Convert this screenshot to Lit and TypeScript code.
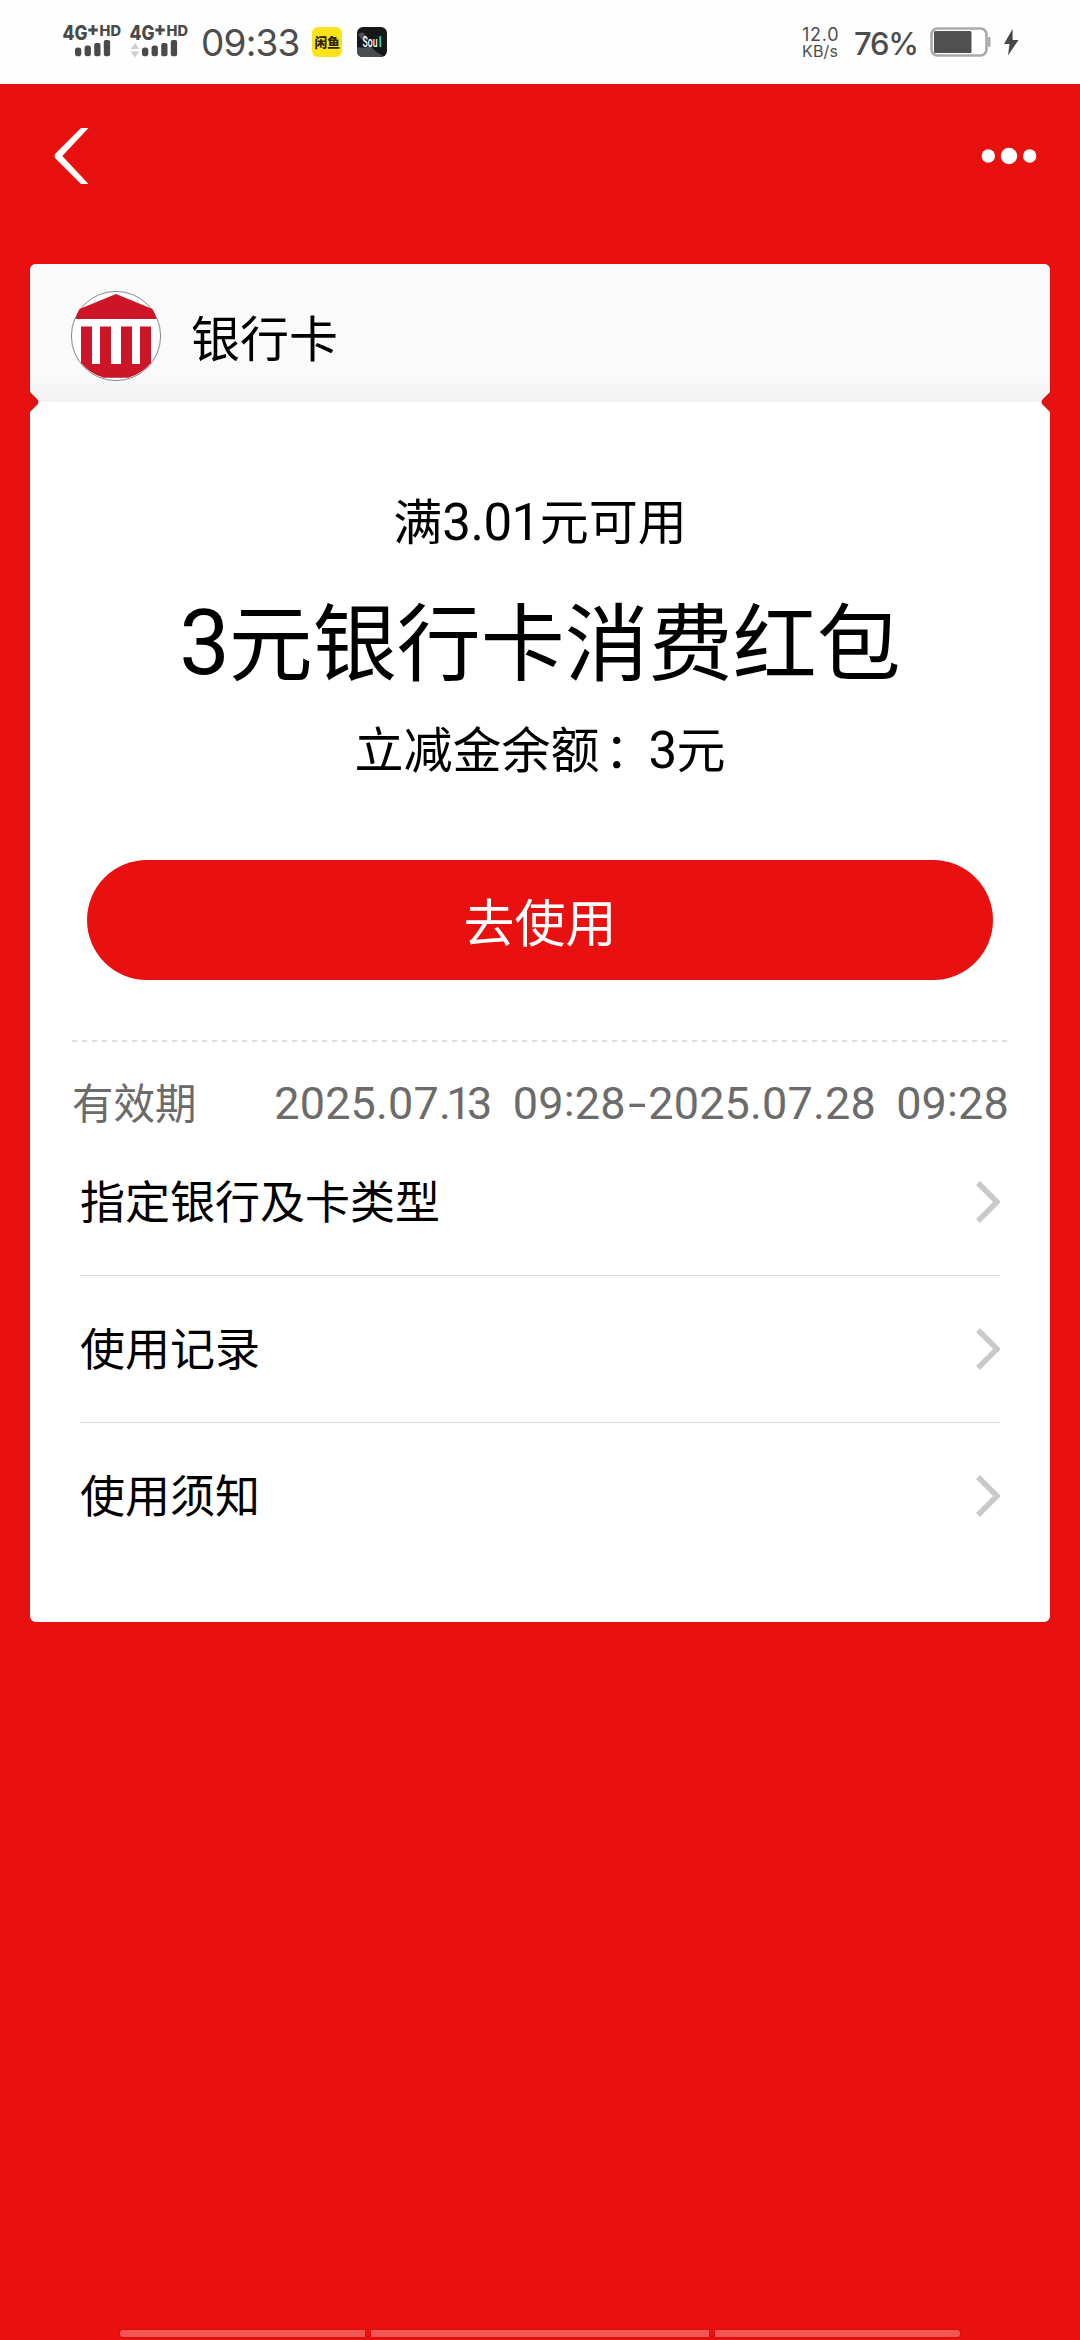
import { LitElement, html, css, svg } from "lit";
import { customElement, property } from "lit/decorators.js";

const SANS = css`"Noto Sans CJK SC", "Liberation Sans", sans-serif`;

@customElement("signal-indicator")
class SignalIndicator extends LitElement {
  @property({ type: Boolean }) traffic = false;

  static styles = css`
    :host { display: block; width: 67px; height: 40px; }
    .icon { display: block; font-family: Inter, sans-serif; font-weight: 800; }
  `;

  render() {
    return html`
      <svg class="icon" width="67" height="40" viewBox="0 0 67 40" fill="#4a4a4a">
        <text x="0.500" y="19.5" font-size="20" textLength="25" lengthAdjust="spacingAndGlyphs">4G</text>
        <path d="M31 5v10M26.300 10h9.500" stroke="#4a4a4a" stroke-width="2.8" />
        <text x="37.5" y="15.500" font-size="14.500" textLength="21.5" lengthAdjust="spacingAndGlyphs">HD</text>
        <rect x="13" y="27.5" width="6.300" height="8.700" rx="2.8" />
        <rect x="22.6" y="25.5" width="6.300" height="10.7" rx="2.5" />
        <rect x="32.2" y="23" width="6.300" height="13.2" rx="2" />
        <rect x="41.800" y="20" width="6.300" height="16.2" rx="2" />
        ${this.traffic
          ? svg`<path d="M6 23l4.3 6H1.7zM6 37.500l4.3-6H1.7z" fill="#cfcfcf" />`
          : ""}
      </svg>
    `;
  }
}

@customElement("status-bar")
class StatusBar extends LitElement {
  static styles = css`
    :host {
      display: flex;
      justify-content: space-between;
      height: 84px;
      box-sizing: border-box;
      padding: 20px 58px 0 62px;
      background: #fefefe;
      color: #4d4d4d;
      font-family: Inter, sans-serif;
    }
    .side { display: flex; align-items: flex-start; }
    .time { width: 111px; margin-left: 5px; font-size: 37px; line-height: 45px; letter-spacing: -0.8px; white-space: nowrap; }
    .app { display: block; margin: 7px 15px 0 0; }
    .fish { font-family: ${SANS}; font-weight: 900; }
    .soul { font-family: Roboto, sans-serif; font-weight: 500; }
    .speed { width: 52px; padding-top: 7px; font-size: 18px; line-height: 15px; letter-spacing: 0.7px; }
    .unit { padding-top: 1px; font-size: 16px; line-height: 17px; letter-spacing: 0.2px; }
    .percent { width: 76px; font-size: 31px; font-weight: 500; line-height: 47px; letter-spacing: -1.2px; white-space: nowrap; }
    .battery { display: block; margin-top: 6px; }
  `;

  render() {
    return html`
      <div class="side">
        <signal-indicator></signal-indicator>
        <signal-indicator traffic></signal-indicator>
        <div class="time">09:33</div>
        <svg class="app" width="30" height="30" viewBox="0 0 30 30">
          <rect width="30" height="30" rx="6" fill="#fde21a" />
          <text class="fish" x="2.500" y="20" font-size="13" textLength="25.500" lengthAdjust="spacingAndGlyphs" fill="#2b2608">闲鱼</text>
        </svg>
        <svg class="app" width="30" height="30" viewBox="0 0 30 30">
          <rect width="30" height="30" rx="6" fill="#151718" />
          <path d="M1 7q5-4 8 2l3 4q-5 1-8-1zM0 20q8 2 14-1 4 6 9 8l3 2q-2 1-4 1H6q-6 0-6-6z" fill="#4b4e50" />
          <text class="soul" x="5.500" y="20" font-size="14" textLength="15" lengthAdjust="spacingAndGlyphs" fill="#fff">Sou</text>
          <text class="soul" x="21.500" y="20" font-size="14" fill="#35d6c8">l</text>
        </svg>
      </div>
      <div class="side">
        <div class="speed">
          <div>12.0</div>
          <div class="unit">KB/s</div>
        </div>
        <div class="percent">76%</div>
        <svg class="battery" width="92" height="32" viewBox="0 0 92 32">
          <rect x="1.500" y="2.500" width="55" height="27" rx="6" fill="#fff" stroke="#aaa" stroke-width="2.600" />
          <rect x="4" y="5" width="37.500" height="22" rx="1.500" fill="#505050" />
          <path d="M58.500 11.500h1.500v9h-1.500z" fill="#aaa" stroke="#aaa" />
          <path d="M82.500 3L74 18h5.500l-1.500 11.500L88.500 14h-5.800z" fill="#484848" />
        </svg>
      </div>
    `;
  }
}

@customElement("nav-header")
class NavHeader extends LitElement {
  static styles = css`
    :host {
      display: flex;
      justify-content: space-between;
      align-items: center;
      height: 144px;
      padding: 0 43px 0 54px;
    }
    .icon { display: block; }
  `;

  render() {
    return html`
      <svg class="icon" width="36" height="56" viewBox="0 0 36 56">
        <path d="M27 0h7.500L8.300 28 34.500 56H27L1.500 30.500q-1.800-2.500 0-5z" fill="#fff" />
      </svg>
      <svg class="icon" width="56" height="18" viewBox="0 0 56 18" fill="#fff">
        <circle cx="7.300" cy="9" r="6.700" />
        <circle cx="28" cy="9" r="8.200" />
        <circle cx="48.700" cy="9" r="6.700" />
      </svg>
    `;
  }
}

@customElement("link-row")
class LinkRow extends LitElement {
  @property() label = "";

  static styles = css`
    :host {
      display: flex;
      justify-content: space-between;
      align-items: center;
      height: 146px;
      border-bottom: 1px solid #d8d8d8;
      font-size: 45px;
      line-height: 60px;
      color: #000;
    }
    :host(:last-child) { border-bottom-color: transparent; }
    .label { padding-bottom: 5px; }
    .arrow { display: block; }
  `;

  render() {
    return html`
      <span class="label">${this.label}</span>
      <svg class="arrow" width="24" height="42" viewBox="0 0 24 42">
        <path d="M2 2l19 19L2 40" fill="none" stroke="#c9c9c9" stroke-width="5.500" />
      </svg>
    `;
  }
}

@customElement("coupon-card")
class CouponCard extends LitElement {
  static styles = css`
    :host {
      display: block;
      height: 1358px;
      margin: 0 30px;
      border-radius: 6px;
      background: #fff;
      color: #000;
      position: relative;
    }
    .head {
      display: flex;
      align-items: center;
      gap: 29px;
      height: 138px;
      box-sizing: border-box;
      padding: 6px 0 0 40px;
      border-radius: 6px 6px 0 0;
      background: linear-gradient(#fafafa 0 78%, #f2f2f2);
      font-size: 49px;
      line-height: 60px;
    }
    .name { padding-bottom: 1px; }
    .logo { display: block; }
    .notch { position: absolute; top: 128px; display: block; }
    .left { left: 0; }
    .right { right: 0; transform: scaleX(-1); }
    .summary {
      display: flex;
      flex-direction: column;
      align-items: center;
      height: 458px;
      padding-top: 85px;
      box-sizing: border-box;
      white-space: nowrap;
    }
    .limit { font-size: 49px; line-height: 64px; }
    .num { font-family: Roboto, sans-serif; font-size: 51px; letter-spacing: -0.500px; }
    .big { font-family: Roboto, sans-serif; font-size: 90px; letter-spacing: -1px; }
    .title { height: 104px; margin-top: 31px; font-size: 84px; line-height: 104px; }
    .balance { height: 64px; margin-top: 25px; font-size: 49px; line-height: 64px; }
    .wide-colon { position: relative; left: 5px; }
    .use {
      display: block;
      width: 906px;
      height: 120px;
      margin: 0 auto;
      padding: 0;
      border: 0;
      border-radius: 60px;
      background: #e8110f;
      color: #fff;
      font-family: inherit;
      font-size: 51px;
      line-height: 118px;
    }
    .dash {
      height: 2px;
      margin: 60px 41px 0 42px;
      background: repeating-linear-gradient(90deg, #dfdfdf 0 5px, transparent 5px 10px);
    }
    .validity {
      display: flex;
      justify-content: space-between;
      height: 87px;
      box-sizing: border-box;
      padding: 29px 41px 0 42px;
      color: #6b6b6b;
      font-size: 41.500px;
      line-height: 60px;
      white-space: nowrap;
    }
    .date { padding-top: 3px; font-family: Roboto, sans-serif; font-size: 45px; letter-spacing: 0.150px; word-spacing: 9px; }
    .colon { vertical-align: 3px; line-height: 1; }
    .tight { letter-spacing: -4.500px; }
    .hyphen { display: inline-block; margin: 0 4.500px 0 5.500px; transform: scaleX(1.450); }
    .links { padding: 0 50px; }
  `;

  render() {
    const colon = html`<span class="colon">:</span>`;
    const notch = svg`<path d="M0 0l7.500 7.500q2 2.500 0 5L0 20z" fill="#dd1414" />`;
    return html`
      <div class="head">
        <svg class="logo" width="92" height="92" viewBox="70 290 92 92">
          <circle cx="116" cy="336" r="44.600" fill="#fff" stroke="#777d84" stroke-width="0.900" />
          <path d="M116 294l36.500 15q2.500 4.500 4 10h-81q1.500-5.500 4-10z" fill="#cc1526" />
          <path
            d="M81 326.500h11V364h8v-37.500h11V364h10v-37.500h11V364h8v-37.500h11V363q-9 10.500-22.500 14.700h-25Q90 373.500 81 363z"
            fill="#cc1526"
          />
        </svg>
        <span class="name">银行卡</span>
      </div>
      <svg class="notch left" width="9" height="20">${notch}</svg>
      <svg class="notch right" width="9" height="20">${notch}</svg>
      <div class="summary">
        <div class="limit">满<span class="num">3.01</span>元可用</div>
        <div class="title"><span class="big">3</span>元银行卡消费红包</div>
        <div class="balance">立减金余额<span class="wide-colon">：</span><span class="num">3</span>元</div>
      </div>
      <button class="use">去使用</button>
      <div class="dash"></div>
      <div class="validity">
        <span>有效期</span>
        <span class="date">2025.07<span class="tight">.1</span>3 09${colon}28<span class="hyphen">-</span>2025.07.28 09${colon}28</span>
      </div>
      <div class="links">
        <link-row label="指定银行及卡类型"></link-row>
        <link-row label="使用记录"></link-row>
        <link-row label="使用须知"></link-row>
      </div>
    `;
  }
}

@customElement("app-root")
class AppRoot extends LitElement {
  static styles = css`
    :host {
      display: flex;
      flex-direction: column;
      width: 1080px;
      height: 2340px;
      background: #e8110f;
      font-family: ${SANS};
      overflow: hidden;
    }
    .content { flex: 1; padding-top: 36px; }
    .gestures { display: flex; gap: 6px; padding: 0 120px 3px; }
    .segment { flex: 0 0 245px; height: 7px; background: #f05654; box-shadow: 0 0 2px #b80c0c; }
    .middle { flex: 1; }
    .segment:first-child { border-radius: 3px 0 0 3px; }
    .segment:last-child { border-radius: 0 3px 3px 0; }
  `;

  render() {
    return html`
      <status-bar></status-bar>
      <nav-header></nav-header>
      <div class="content"><coupon-card></coupon-card></div>
      <div class="gestures">
        <div class="segment"></div>
        <div class="segment middle"></div>
        <div class="segment"></div>
      </div>
    `;
  }
}
